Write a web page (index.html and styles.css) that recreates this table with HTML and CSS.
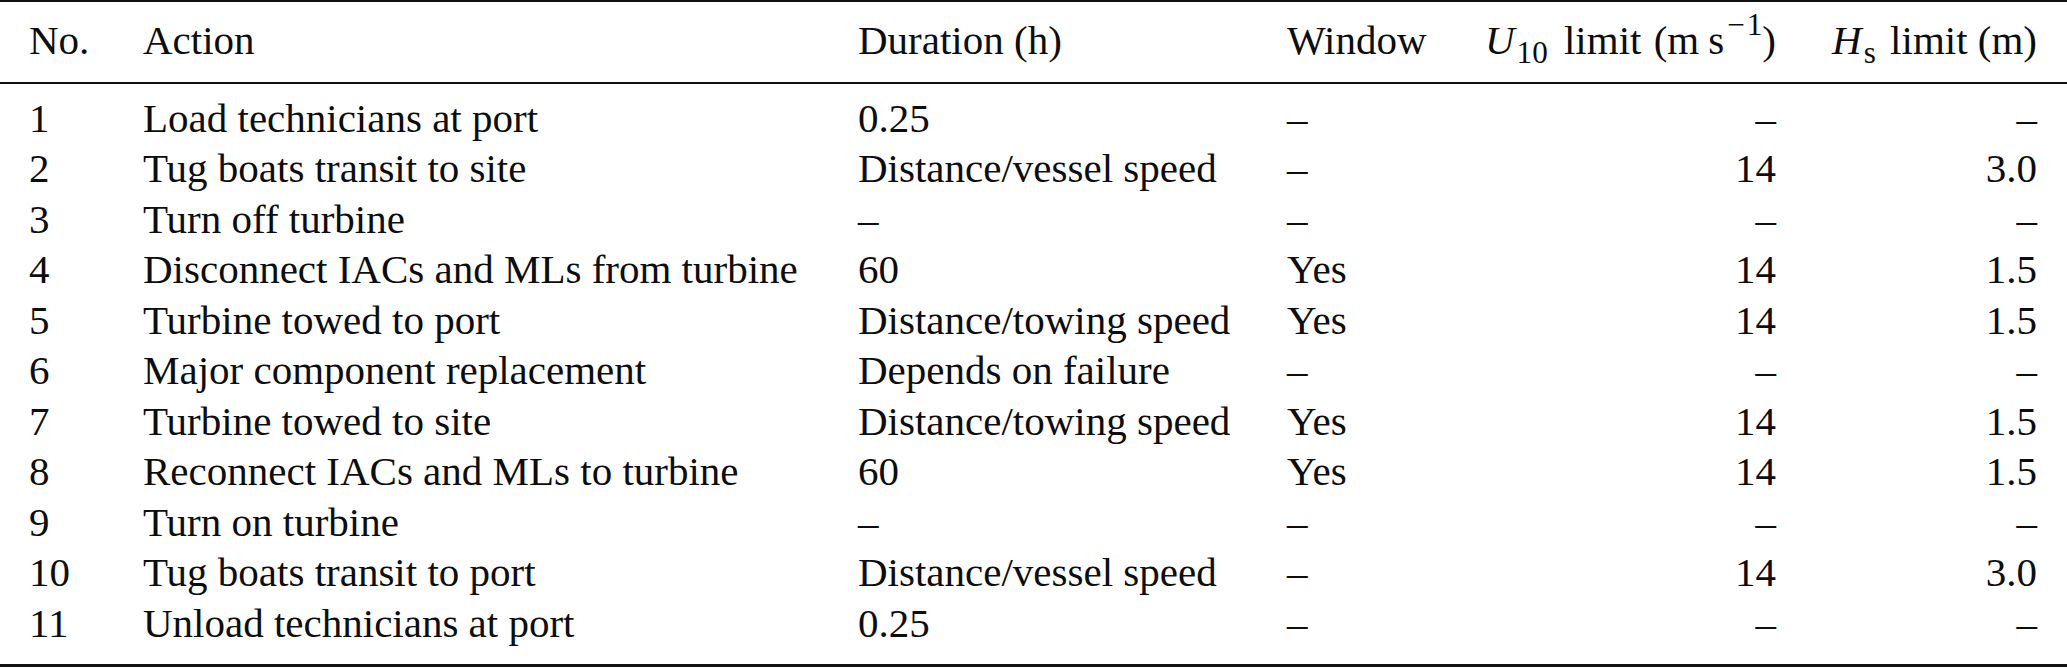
FILE: index.html
```html
<!DOCTYPE html>
<html lang="en">
<head>
<meta charset="utf-8">
<title>Table</title>
<link rel="stylesheet" href="styles.css">
</head>
<body>
<table class="tbl">
  <colgroup>
    <col class="c-no">
    <col class="c-act">
    <col class="c-dur">
    <col class="c-win">
    <col class="c-u">
    <col class="c-h">
  </colgroup>
  <thead>
    <tr>
      <th class="no">No.</th>
      <th>Action</th>
      <th>Duration (h)</th>
      <th>Window</th>
      <th class="num wide"><i>U</i><sub>10</sub> limit (m<span class="thin"></span>s<sup><span class="minus">−</span>1</sup>)</th>
      <th class="num last"><i>H</i><sub>s</sub> limit (m)</th>
    </tr>
  </thead>
  <tbody>
    <tr><td class="no">1</td><td>Load technicians at port</td><td>0.25</td><td>–</td><td class="num">–</td><td class="num last">–</td></tr>
    <tr><td class="no">2</td><td>Tug boats transit to site</td><td>Distance/vessel speed</td><td>–</td><td class="num">14</td><td class="num last">3.0</td></tr>
    <tr><td class="no">3</td><td>Turn off turbine</td><td>–</td><td>–</td><td class="num">–</td><td class="num last">–</td></tr>
    <tr><td class="no">4</td><td>Disconnect IACs and MLs from turbine</td><td>60</td><td>Yes</td><td class="num">14</td><td class="num last">1.5</td></tr>
    <tr><td class="no">5</td><td>Turbine towed to port</td><td>Distance/towing speed</td><td>Yes</td><td class="num">14</td><td class="num last">1.5</td></tr>
    <tr><td class="no">6</td><td>Major component replacement</td><td>Depends on failure</td><td>–</td><td class="num">–</td><td class="num last">–</td></tr>
    <tr><td class="no">7</td><td>Turbine towed to site</td><td>Distance/towing speed</td><td>Yes</td><td class="num">14</td><td class="num last">1.5</td></tr>
    <tr><td class="no">8</td><td>Reconnect IACs and MLs to turbine</td><td>60</td><td>Yes</td><td class="num">14</td><td class="num last">1.5</td></tr>
    <tr><td class="no">9</td><td>Turn on turbine</td><td>–</td><td>–</td><td class="num">–</td><td class="num last">–</td></tr>
    <tr><td class="no">10</td><td>Tug boats transit to port</td><td>Distance/vessel speed</td><td>–</td><td class="num">14</td><td class="num last">3.0</td></tr>
    <tr><td class="no">11</td><td>Unload technicians at port</td><td>0.25</td><td>–</td><td class="num">–</td><td class="num last">–</td></tr>
  </tbody>
</table>
</body>
</html>
```
FILE: styles.css
```css
* { box-sizing: border-box; }
html, body { margin: 0; padding: 0; background: #fff; }
body {
  font-family: "Liberation Serif", "Times New Roman", serif;
  font-size: 41px;
  color: #0d0d0d;
}
.tbl {
  width: 2067px;
  border-collapse: collapse;
  table-layout: fixed;
  border-top: 2px solid #111;
  border-bottom: 3px solid #111;
}
.c-no { width: 143px; }
.c-act { width: 715px; }
.c-dur { width: 429px; }
.c-win { width: 163px; }
.c-u { width: 326px; }
.c-h { width: 291px; }
th, td {
  padding: 0;
  text-align: left;
  font-weight: normal;
  line-height: 50.5px;
  white-space: nowrap;
  vertical-align: baseline;
}
.no { padding-left: 29px; }
.num { text-align: right; }
.last { padding-right: 30px; }
.wide { word-spacing: 2px; }
thead th {
  padding-top: 13px;
  padding-bottom: 16px;
  border-bottom: 2px solid #111;
}
tbody tr:first-child td { padding-top: 9px; }
tbody tr:last-child td { padding-bottom: 16px; }
sub, sup { font-size: 76%; line-height: 0; }
sub { vertical-align: -0.3em; margin: 0 4px 0 2px; }
sup { vertical-align: 0.6em; margin-left: 3px; }
.minus { margin-right: 2px; }
.thin { display: inline-block; width: 9px; }
```
